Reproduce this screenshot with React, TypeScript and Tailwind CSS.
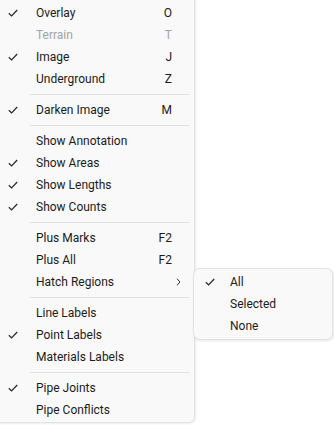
import React from 'react';

type Item =
  | { sep: true }
  | { label: string; checked?: boolean; disabled?: boolean; shortcut?: string; sub?: boolean };

const ITEMS: Item[] = [
  { label: 'Overlay', checked: true, shortcut: 'O' },
  { label: 'Terrain', disabled: true, shortcut: 'T' },
  { label: 'Image', checked: true, shortcut: 'J' },
  { label: 'Underground', shortcut: 'Z' },
  { sep: true },
  { label: 'Darken Image', checked: true, shortcut: 'M' },
  { sep: true },
  { label: 'Show Annotation' },
  { label: 'Show Areas', checked: true },
  { label: 'Show Lengths', checked: true },
  { label: 'Show Counts', checked: true },
  { sep: true },
  { label: 'Plus Marks', shortcut: 'F2' },
  { label: 'Plus All', shortcut: 'F2' },
  { label: 'Hatch Regions', sub: true },
  { sep: true },
  { label: 'Line Labels' },
  { label: 'Point Labels', checked: true },
  { label: 'Materials Labels' },
  { sep: true },
  { label: 'Pipe Joints', checked: true },
  { label: 'Pipe Conflicts' },
];

const Check = () => (
  <svg width="10" height="8" viewBox="0 0 10 8" fill="none">
    <path d="M0.8 4.2 L3.6 6.9 L9.2 1" stroke="#262626" strokeWidth="1.2" />
  </svg>
);

const Chevron = () => (
  <svg width="5" height="8" viewBox="0 0 5 8" fill="none">
    <path d="M1 0.8 L4 4 L1 7.2" stroke="#333" strokeWidth="1" />
  </svg>
);

const Row = ({ item }: { item: Exclude<Item, { sep: true }> }) => (
  <div className={`flex items-center h-[22px] ${item.disabled ? 'text-[#a3a3a3]' : 'text-[#1b1b1b]'}`}>
    <div className="w-[35px] pl-[7px] flex items-center">{item.checked && <Check />}</div>
    <span className="flex-1">{item.label}</span>
    {item.shortcut && <span className="w-[22px] text-right mr-[22px]">{item.shortcut}</span>}
    {item.sub && <span className="mr-[13px] flex items-center"><Chevron /></span>}
  </div>
);

export default function App() {
  return (
    <div className="relative w-[334px] h-[425px] bg-white overflow-hidden text-[12px]" style={{ fontFamily: '"Segoe UI", Roboto, sans-serif' }}>
      <div className="absolute left-[-8px] top-[-8px] w-[203px] h-[431px] bg-[#f9f9f9] border border-[#e3e3e3] rounded-br-[7px] shadow-[1px_1px_2px_rgba(0,0,0,0.08)] pt-[9px] pl-[8px]">
        {ITEMS.map((item, i) =>
          'sep' in item ? (
            <div key={i} className="h-[9px] flex items-center pl-[29px] pr-[5px]">
              <div className="h-px w-full bg-[#e0e0e0]" />
            </div>
          ) : (
            <Row key={i} item={item} />
          )
        )}
      </div>
      <div className="absolute left-[193px] top-[268px] w-[140px] h-[72px] bg-[#f9f9f9] border border-[#e3e3e3] rounded-[7px] shadow-[1px_1px_3px_rgba(0,0,0,0.1)] pt-[2px]">
        {[
          { label: 'All', checked: true },
          { label: 'Selected' },
          { label: 'None' },
        ].map((s) => (
          <div key={s.label} className="flex items-center h-[22px] text-[#1b1b1b]">
            <div className="w-[36px] pl-[11px] flex items-center">{s.checked && <Check />}</div>
            <span>{s.label}</span>
          </div>
        ))}
      </div>
    </div>
  );
}
